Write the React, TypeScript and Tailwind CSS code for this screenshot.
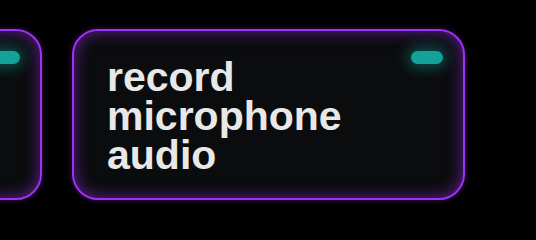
import React from 'react';

const cards = ['', 'record microphone audio'];

const Card: React.FC<{ label: string }> = ({ label }) => (
  <div className="relative shrink-0 w-[393px] h-[171px] rounded-[26px] border-2 border-[#a030f2] bg-[#0b0c0e] shadow-[inset_0_0_16px_rgba(155,45,240,0.6),0_0_6px_rgba(155,45,240,0.35)] flex items-start pl-[33px] pt-[27px]">
    <span className="absolute top-[20px] right-[20px] w-[32px] h-[13px] rounded-full bg-[#14a199] shadow-[0_0_14px_4px_rgba(20,161,153,0.45)]" />
    <p className="w-[270px] text-[41px] leading-[39px] font-bold text-[#e8e8e8] font-['Liberation_Sans',Arial,sans-serif]">
      {label}
    </p>
  </div>
);

export default function App() {
  return (
    <div className="w-[536px] h-[240px] bg-black overflow-hidden">
      <div className="flex gap-[30px] pt-[29px] -ml-[351px]">
        {cards.map((c, i) => (
          <Card key={i} label={c} />
        ))}
      </div>
    </div>
  );
}
